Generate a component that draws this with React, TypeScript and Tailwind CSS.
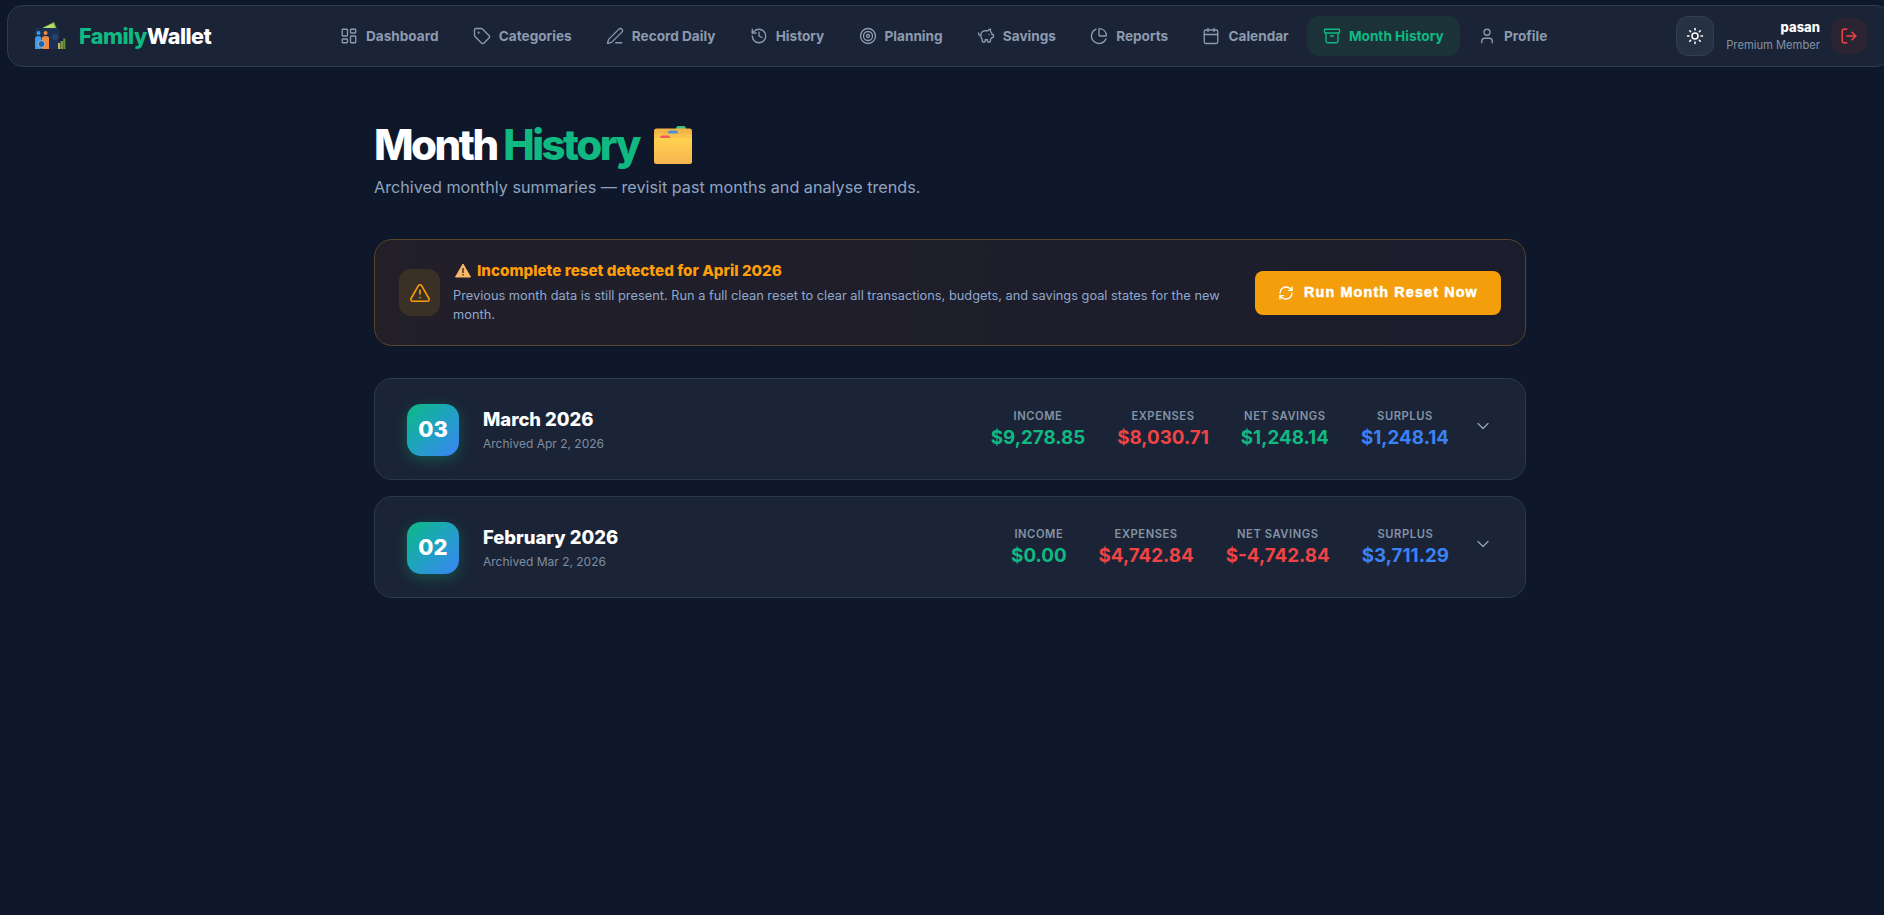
import {
  Archive,
  Calendar,
  ChartPie,
  ChevronDown,
  History,
  LayoutDashboard,
  LogOut,
  PenLine,
  PiggyBank,
  RefreshCw,
  Sun,
  Tag,
  Target,
  TriangleAlert,
  User,
} from 'lucide-react';

const links = [
  { label: 'Dashboard', icon: LayoutDashboard },
  { label: 'Categories', icon: Tag },
  { label: 'Record Daily', icon: PenLine },
  { label: 'History', icon: History },
  { label: 'Planning', icon: Target },
  { label: 'Savings', icon: PiggyBank },
  { label: 'Reports', icon: ChartPie },
  { label: 'Calendar', icon: Calendar },
  { label: 'Month History', icon: Archive, active: true },
  { label: 'Profile', icon: User },
];

const months = [
  {
    num: '03',
    name: 'March 2026',
    archived: 'Archived Apr 2, 2026',
    income: '$9,278.85',
    expenses: '$8,030.71',
    net: '$1,248.14',
    netPositive: true,
    surplus: '$1,248.14',
  },
  {
    num: '02',
    name: 'February 2026',
    archived: 'Archived Mar 2, 2026',
    income: '$0.00',
    expenses: '$4,742.84',
    net: '$-4,742.84',
    netPositive: false,
    surplus: '$3,711.29',
  },
];

function WalletLogo() {
  return (
    <svg width="34" height="30" viewBox="0 0 34 30" className="shrink-0">
      <path d="M8 8 L22 1 L25 8 Z" fill="#7cb342" />
      <path d="M11 7 L21 2.5 L23 7 Z" fill="#b7dc6a" />
      <rect x="3" y="7" width="24" height="21" rx="2" fill="#1c2f54" />
      <circle cx="23" cy="16" r="3" fill="#2a416c" />
      <circle cx="6.5" cy="12" r="2" fill="#3b9be8" />
      <path d="M3 28 V18 Q3 15 6.5 15 Q9.5 15 9.5 18 V28 Z" fill="#3b9be8" />
      <circle cx="13.5" cy="12" r="2" fill="#f08a3c" />
      <path d="M10 28 V17 Q10 15 13.5 15 Q17 15 17 17 V28 Z" fill="#f08a3c" />
      <circle cx="9.5" cy="23" r="3.4" fill="#1f5fa8" stroke="#dbe7f5" strokeWidth="0.6" />
      <rect x="26" y="22" width="2.2" height="6" fill="#c9b458" />
      <rect x="28.6" y="20" width="2.2" height="8" fill="#7fa83e" />
      <rect x="31.2" y="17.5" width="2.2" height="10.5" fill="#5f8f34" />
    </svg>
  );
}

function FolderEmoji() {
  return (
    <svg width="40" height="40" viewBox="0 0 40 40" className="shrink-0">
      <defs>
        <linearGradient id="folderFront" x1="0" y1="0" x2="0" y2="1">
          <stop offset="0" stopColor="#ffd24f" />
          <stop offset="1" stopColor="#f7b551" />
        </linearGradient>
      </defs>
      <rect x="23" y="1" width="10" height="6" rx="2.5" fill="#3fbf7f" />
      <rect x="1" y="3.5" width="38" height="30" rx="2.5" fill="#f2b544" />
      <rect x="15" y="5.5" width="10" height="6" rx="2.5" fill="#4a90d9" />
      <rect x="1" y="8.5" width="38" height="28" rx="2.5" fill="#f9c14c" />
      <rect x="7" y="10.5" width="10" height="6" rx="2.5" fill="#ef5a5a" />
      <rect x="1" y="13" width="38" height="26" rx="2.5" fill="url(#folderFront)" />
    </svg>
  );
}

function WarningEmoji() {
  return (
    <svg width="16" height="15" viewBox="0 0 16 15" className="shrink-0 ml-[2px]">
      <path d="M8 1 L15.5 14 H0.5 Z" fill="#fbb86a" stroke="#fbb86a" strokeLinejoin="round" />
      <rect x="7.3" y="5" width="1.4" height="5" fill="#3a2c1e" />
      <rect x="7.3" y="11" width="1.4" height="1.4" fill="#3a2c1e" />
    </svg>
  );
}

function Stat({ label, value, color }: { label: string; value: string; color: string }) {
  return (
    <div className="flex flex-col items-center">
      <span className="text-[11.2px] leading-[16px] font-semibold uppercase tracking-[0.05em] text-[#8492a6]">{label}</span>
      <span className={`text-[18.8px] leading-[28px] font-bold ${color}`}>{value}</span>
    </div>
  );
}

export default function App() {
  return (
    <div className="h-screen overflow-hidden bg-[#0f172a] font-['Inter',sans-serif]">
      <div className="w-[1900px]">
        {/* Navbar */}
        <nav className="ml-[7px] mr-2 mt-[5px] h-[62px] flex items-center px-6 rounded-2xl bg-[#1a2436] border border-[#2f3b50]">
          <div className="flex items-center gap-[13px] w-[292px]">
            <WalletLogo />
            <span className="text-[21.6px] font-extrabold tracking-tight text-white">
              <span className="text-[#10b981]">Family</span>Wallet
            </span>
          </div>

          <div className="flex items-center gap-[2.25px]">
            {links.map(link => (
              <div
                key={link.label}
                className={`h-10 px-4 flex items-center gap-2 rounded-xl text-[13.6px] font-bold ${
                  link.active ? 'bg-[#1b3239] text-[#10b981]' : 'text-[#8d9ab0]'
                }`}
              >
                <link.icon size={18} strokeWidth={1.75} />
                {link.label}
              </div>
            ))}
          </div>

          <div className="ml-auto flex items-center">
            <button className="w-[38px] h-10 flex items-center justify-center rounded-xl bg-[#263143] border border-[#323e52] text-white">
              <Sun size={18} />
            </button>
            <div className="ml-3 flex flex-col items-end">
              <span className="text-[13px] leading-[18px] font-extrabold text-white">pasan</span>
              <span className="text-[11.2px] leading-[18px] text-[#8492a6]">Premium Member</span>
            </div>
            <button className="ml-[11px] w-9 h-9 flex items-center justify-center rounded-xl bg-[#2a2433] text-[#ef4444]">
              <LogOut size={18} />
            </button>
          </div>
        </nav>

        {/* Main */}
        <main className="w-[1152px] mx-auto pt-[50px]">
          <div className="flex items-center gap-[14px]">
            <h1 className="text-[42px] leading-[56px] font-extrabold tracking-[-0.06em] text-white">
              Month <span className="text-[#10b981]">History</span>
            </h1>
            <FolderEmoji />
          </div>
          <p className="mt-[2px] text-[16.2px] leading-[24px] text-[#8fa3bf]">
            Archived monthly summaries — revisit past months and analyse trends.
          </p>

          {/* Reset alert */}
          <div className="mt-[40px] flex items-center gap-6 px-6 h-[107px] rounded-[18px] border border-[#5a4529] bg-gradient-to-r from-[#221f29] to-[#1b1c2c]">
            <div className="flex-1 flex items-center gap-[13px]">
              <div className="w-[41px] h-[47px] shrink-0 flex items-center justify-center rounded-xl bg-[#3b3025] text-[#f59e0b]">
                <TriangleAlert size={22} strokeWidth={1.75} />
              </div>
              <div className="flex-1 pb-[2px]">
                <div className="flex items-center gap-[6px] text-[15.2px] leading-[22px] font-extrabold text-[#ff9d0a]">
                  <WarningEmoji />
                  Incomplete reset detected for April 2026
                </div>
                <p className="mt-[4px] text-[12.8px] leading-[19px] text-[#8fa9cc]">
                  Previous month data is still present. Run a full clean reset to clear all transactions, budgets, and savings goal states for the new month.
                </p>
              </div>
            </div>
            <button className="w-[246px] h-11 shrink-0 flex items-center justify-center gap-[10px] rounded-lg bg-[#f59e0b] text-white text-[14.4px] font-['Liberation_Sans',sans-serif] font-black tracking-[0.077em] [-webkit-text-stroke:0.5px_white]">
              <RefreshCw size={16} />
              Run Month Reset Now
            </button>
          </div>

          {/* Archived months */}
          <div className="mt-8 flex flex-col gap-4">
            {months.map(m => (
              <div key={m.num} className="h-[102px] px-8 flex items-center rounded-[18px] bg-[#1a2436] border border-[#2d394d]">
                <div className="w-[52px] h-[52px] mt-[1px] pb-[1px] shrink-0 flex items-center justify-center rounded-[14px] bg-gradient-to-br from-[#10b981] to-[#3b82f6] text-white text-[22px] font-extrabold shadow-[0_4px_14px_rgba(16,185,129,0.3)]">
                  {m.num}
                </div>
                <div className="ml-6">
                  <div className="text-[18.4px] leading-[28px] font-extrabold text-white">{m.name}</div>
                  <div className="mt-[1px] text-[12px] leading-[20px] text-[#7f8da3]">{m.archived}</div>
                </div>
                <div className="ml-auto mt-[2px] flex items-center gap-8">
                  <Stat label="Income" value={m.income} color="text-[#10b981]" />
                  <Stat label="Expenses" value={m.expenses} color="text-[#ef4444]" />
                  <Stat label="Net Savings" value={m.net} color={m.netPositive ? 'text-[#10b981]' : 'text-[#ef4444]'} />
                  <Stat label="Surplus" value={m.surplus} color="text-[#3b82f6]" />
                </div>
                <ChevronDown size={20} strokeWidth={1.5} className="ml-6 mb-[6px] text-[#94a3b8]" />
              </div>
            ))}
          </div>
        </main>
      </div>
    </div>
  );
}
